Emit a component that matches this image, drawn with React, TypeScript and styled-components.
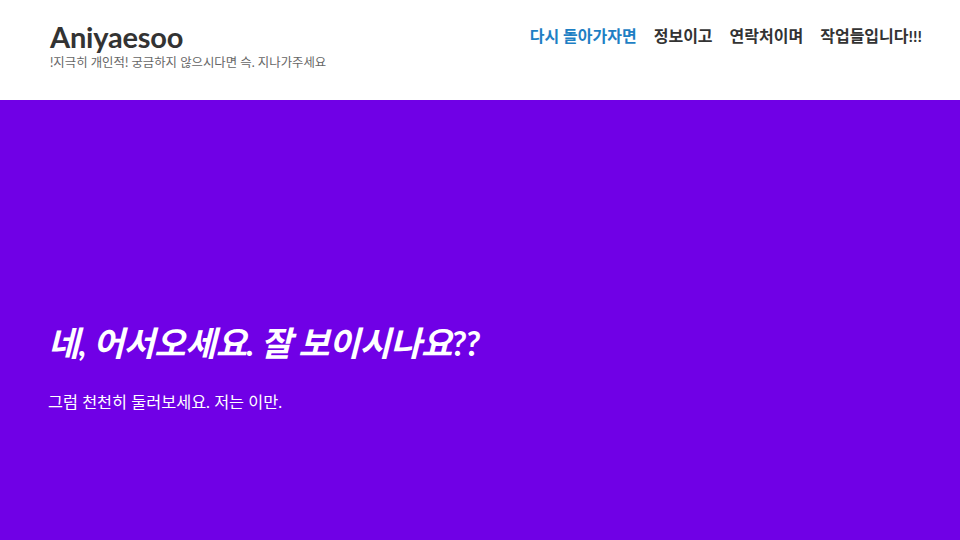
import React from "react";
import styled, { createGlobalStyle } from "styled-components";

const GlobalStyle = createGlobalStyle`
  html, body {
    margin: 0;
    padding: 0;
    background: #ffffff;
    font-family: "Lato", "Noto Sans CJK KR", sans-serif;
  }
`;

const Page = styled.div`
  display: flex;
  flex-direction: column;
  width: 960px;
  height: 540px;
`;

const Header = styled.header`
  display: flex;
  justify-content: space-between;
  align-items: flex-start;
  height: 100px;
  box-sizing: border-box;
  padding: 19px 38px 0 50px;
  background: #ffffff;
`;

const Brand = styled.div`
  display: flex;
  flex-direction: column;
`;

const Title = styled.h1`
  margin: 0;
  font-size: 29px;
  line-height: 36px;
  font-weight: 700;
  color: #333333;
  letter-spacing: -0.2px;
`;

const Tagline = styled.p`
  margin: 0;
  font-size: 12.4px;
  line-height: 15px;
  color: #666666;
`;

const Nav = styled.nav`
  display: flex;
  gap: 17px;
  padding-top: 7px;
`;

const NavLink = styled.a<{ $active?: boolean }>`
  font-size: 16px;
  font-weight: 700;
  line-height: 20px;
  text-decoration: none;
  color: ${(p) => (p.$active ? "#1e7fc4" : "#333333")};
  cursor: pointer;
`;

const Hero = styled.section`
  flex: 1;
  display: flex;
  flex-direction: column;
  justify-content: center;
  padding: 94px 48px 0;
  background: #7000e6;
  color: #ffffff;
`;

const Headline = styled.h2`
  margin: 0;
  font-size: 34px;
  line-height: 40px;
  font-weight: 700;
  font-style: italic;
  letter-spacing: -0.6px;
`;

const Lead = styled.p`
  margin: 29px 0 0;
  font-size: 16.3px;
  line-height: 20px;
`;

function App() {
  return (
    <Page>
      <GlobalStyle />
      <Header>
        <Brand>
          <Title>Aniyaesoo</Title>
          <Tagline>!지극히 개인적! 궁금하지 않으시다면 슥. 지나가주세요</Tagline>
        </Brand>
        <Nav>
          <NavLink $active>다시 돌아가자면</NavLink>
          <NavLink>정보이고</NavLink>
          <NavLink>연락처이며</NavLink>
          <NavLink>작업들입니다!!!</NavLink>
        </Nav>
      </Header>
      <Hero>
        <Headline>네, 어서오세요. 잘 보이시나요??</Headline>
        <Lead>그럼 천천히 둘러보세요. 저는 이만.</Lead>
      </Hero>
    </Page>
  );
}

export default App;
